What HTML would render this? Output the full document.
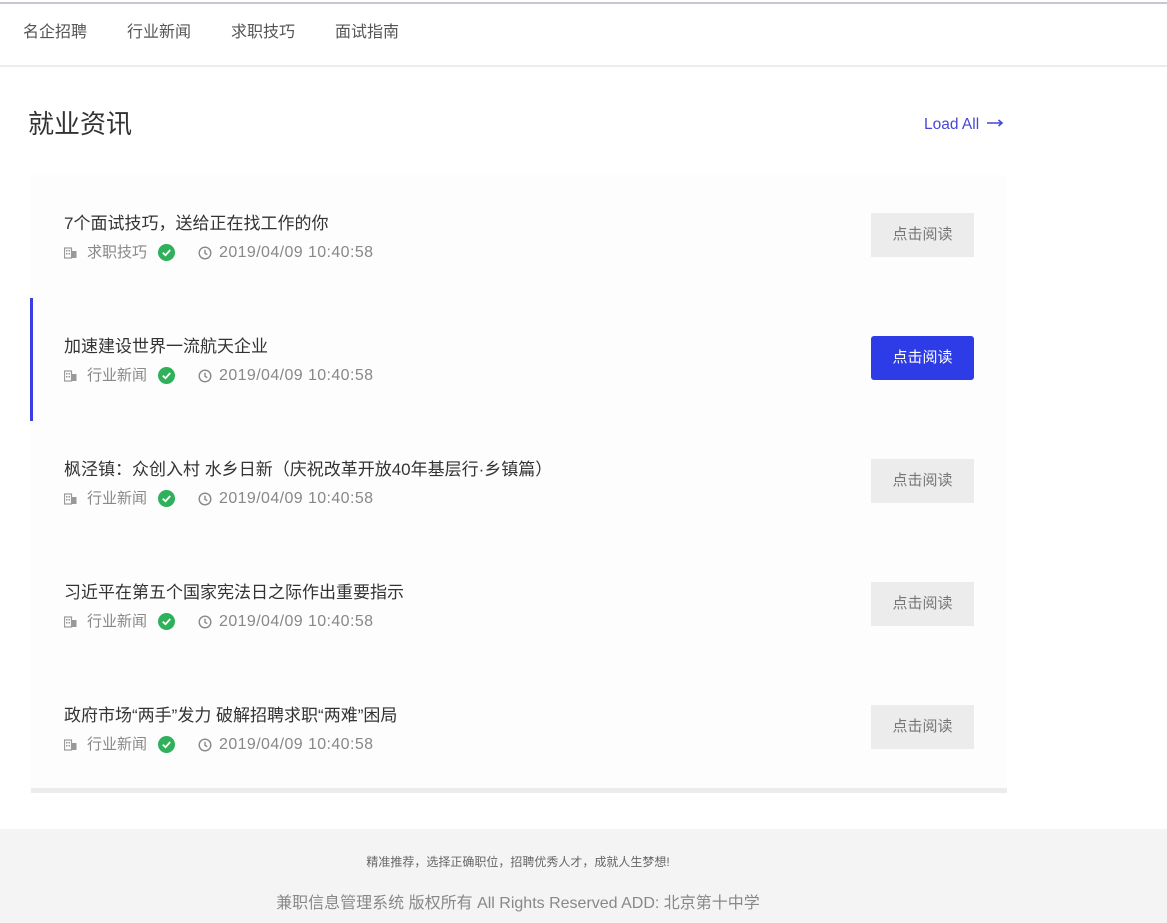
<!DOCTYPE html>
<html><head><meta charset="utf-8"><style>
*{margin:0;padding:0;box-sizing:border-box}
body{width:1167px;height:923px;background:#fff;font-family:"Liberation Sans","Noto Sans CJK SC",sans-serif;position:relative;overflow:hidden;color:#333}
.topline{position:absolute;left:0;top:2px;width:1167px;height:2px;background:#c8c8d0}
.nav{position:absolute;top:18px;left:23px;font-size:16px;color:#555}
.nav span{position:absolute;white-space:nowrap}
.navline{position:absolute;left:0;top:65px;width:1167px;height:2px;background:#ececec}
h1{position:absolute;left:28px;top:104px;font-size:26px;font-weight:normal;color:#333}
.load{position:absolute;left:924px;top:116px;font-size:15.5px;color:#4747d6;white-space:nowrap}
.item{position:absolute;left:30px;width:977px;height:123px;background:#fdfdfd}
.item.act{border-left:3px solid #3b3fe0}
.t{position:absolute;left:34px;top:34px;font-size:17px;color:#333;white-space:nowrap}
.m{position:absolute;left:34px;top:67px;font-size:16px;color:#888;white-space:nowrap;display:flex;align-items:center}
.act .t,.act .m{left:31px}
.btn{position:absolute;left:841px;top:38px;width:103px;height:44px;background:#ececec;color:#777;font-size:15px;text-align:center;line-height:44px}
.act .btn{left:838px;background:#2d3ce6;color:#fff;border-radius:3px}
.bottom{position:absolute;left:31px;top:788px;width:976px;height:5px;background:#ececec}
.footer{position:absolute;left:0;top:829px;width:1167px;height:94px;background:#f4f4f4}
.f1{position:absolute;top:24px;left:0;width:1036px;text-align:center;font-size:12px;color:#666}
.f2{position:absolute;top:60px;left:0;width:1036px;text-align:center;font-size:16px;color:#888}
</style></head><body>
<div class="topline"></div>
<div class="nav"><span style="left:0">名企招聘</span><span style="left:104px">行业新闻</span><span style="left:208px">求职技巧</span><span style="left:312px">面试指南</span></div>
<div class="navline"></div>
<h1>就业资讯</h1>
<div class="load">Load All <svg width="18" height="10" viewBox="0 0 18 10" style="vertical-align:1px;margin-left:3px"><path d="M1 5H16M12.5 2L16 5L12.5 8" stroke="#4747d6" stroke-width="1.6" fill="none"/></svg></div>

<div id="items"></div>
<script>
var d=[["7个面试技巧，送给正在找工作的你","求职技巧"],["加速建设世界一流航天企业","行业新闻"],["枫泾镇：众创入村 水乡日新（庆祝改革开放40年基层行·乡镇篇）","行业新闻"],["习近平在第五个国家宪法日之际作出重要指示","行业新闻"],["政府市场“两手”发力 破解招聘求职“两难”困局","行业新闻"]];
var h='';
d.forEach(function(x,i){
h+='<div class="item'+(i==1?' act':'')+'" style="top:'+(175+i*123)+'px"><div class="t">'+x[0]+'</div><div class="m">'+
'<svg width="13" height="12" viewBox="0 0 13 12"><rect x="0.5" y="1" width="7" height="10" fill="none" stroke="#999" stroke-width="1.2"/><rect x="7.5" y="4" width="5" height="7" fill="#999"/><rect x="2" y="3" width="1.5" height="1.5" fill="#999"/><rect x="4.5" y="3" width="1.5" height="1.5" fill="#999"/><rect x="2" y="6" width="1.5" height="1.5" fill="#999"/><rect x="4.5" y="6" width="1.5" height="1.5" fill="#999"/></svg>'+
'<span style="margin-left:10px;font-size:15px;position:relative;top:-1px">'+x[1]+'</span>'+
'<svg width="17" height="17" viewBox="0 0 17 17" style="margin-left:11px"><circle cx="8.5" cy="8.5" r="8.5" fill="#2fb05a"/><path d="M4.8 8.7L7.5 11.2L12.2 6" stroke="#fff" stroke-width="1.8" fill="none"/></svg>'+
'<svg width="14" height="14" viewBox="0 0 14 14" style="margin-left:23px"><circle cx="7" cy="7" r="5.8" fill="none" stroke="#888" stroke-width="1.4"/><path d="M7 3.8V7.3L9.3 8.6" stroke="#888" stroke-width="1.4" fill="none"/></svg>'+
'<span style="margin-left:7px;letter-spacing:0.4px">2019/04/09 10:40:58</span></div><div class="btn">点击阅读</div></div>';
});
document.getElementById('items').innerHTML=h;
</script>
<div class="bottom"></div>
<div class="footer">
<div class="f1">精准推荐，选择正确职位，招聘优秀人才，成就人生梦想!</div>
<div class="f2">兼职信息管理系统 版权所有 All Rights Reserved ADD: 北京第十中学</div>
</div>
</body></html>
